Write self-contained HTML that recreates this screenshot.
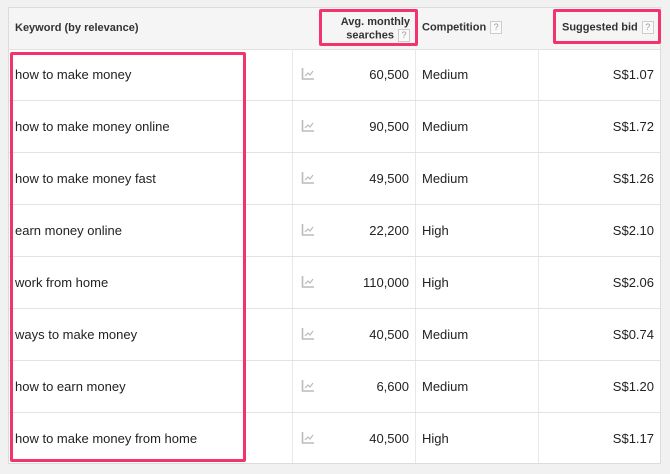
<!DOCTYPE html>
<html><head><style>
body{margin:0;width:670px;height:474px;background:#f1f1f1;font-family:"Liberation Sans",Arial,sans-serif;position:relative;overflow:hidden;color:#222}
.t{position:absolute;left:8px;top:7px;width:653px;height:457px;background:#fff;border:1px solid #dcdcdc;box-sizing:border-box}
.hd{position:absolute;left:0;top:0;width:100%;height:41px;background:#f5f5f5;border-bottom:1px solid #e2e2e2}
.vl{position:absolute;top:41px;bottom:0;width:1px;background:#e8e8e8}
.hl{position:absolute;left:0;right:0;height:1px;background:#e2e2e2}
.c{position:absolute;font-size:13px;line-height:15px}
.h{position:absolute;font-size:11px;font-weight:bold;color:#333;line-height:13px}
.q{display:inline-block;width:10px;height:11px;border:1px solid #ccc;font-size:9px;line-height:11px;text-align:center;color:#999;font-weight:normal;vertical-align:middle;margin-left:4px;background:#fafafa}
.pk{position:absolute;border:3px solid #f2336e;box-sizing:border-box;border-radius:2px}
.ic{position:absolute}
</style></head><body>
<div class="t">
<div class="hd"></div>
<div class="vl" style="left:283px"></div>
<div class="vl" style="left:406px"></div>
<div class="vl" style="left:529px"></div>
</div>
<div class="h" style="left:15px;top:22px">Keyword (by relevance)</div>
<div class="h" style="left:322px;top:16px;width:88px;text-align:right">Avg. monthly<br>searches<span class="q">?</span></div>
<div class="h" style="left:422px;top:21px">Competition<span class="q">?</span></div>
<div class="h" style="left:562px;top:21px">Suggested bid<span class="q">?</span></div>
<div id="rows"></div>
<div class="pk" style="left:10px;top:52px;width:236px;height:410px"></div>
<div class="pk" style="left:319px;top:9px;width:99px;height:37px"></div>
<div class="pk" style="left:553px;top:9px;width:108px;height:35px"></div>
<script>
var d=[["how to make money","60,500","Medium","S$1.07"],["how to make money online","90,500","Medium","S$1.72"],["how to make money fast","49,500","Medium","S$1.26"],["earn money online","22,200","High","S$2.10"],["work from home","110,000","High","S$2.06"],["ways to make money","40,500","Medium","S$0.74"],["how to earn money","6,600","Medium","S$1.20"],["how to make money from home","40,500","High","S$1.17"]];
var h="";d.forEach(function(r,i){var y=48+52*i;
if(i>0)h+='<div class="hl" style="left:9px;width:651px;top:'+y+'px"></div>';
var ty=y+19;
h+='<div class="c" style="left:15px;top:'+ty+'px">'+r[0]+'</div>';
h+='<svg class="ic" style="left:301px;top:'+(y+20)+'px" width="13" height="12"><path d="M1.5 0V11H13" stroke="#bbb" stroke-width="1.6" fill="none"/><path d="M4 8L7 5L9 7L12 3" stroke="#bbb" stroke-width="1.2" fill="none"/></svg>';
h+='<div class="c" style="left:320px;width:89px;text-align:right;top:'+ty+'px">'+r[1]+'</div>';
h+='<div class="c" style="left:422px;top:'+ty+'px">'+r[2]+'</div>';
h+='<div class="c" style="left:560px;width:94px;text-align:right;top:'+ty+'px">'+r[3]+'</div>';});
document.getElementById("rows").innerHTML=h;
</script>
</body></html>
